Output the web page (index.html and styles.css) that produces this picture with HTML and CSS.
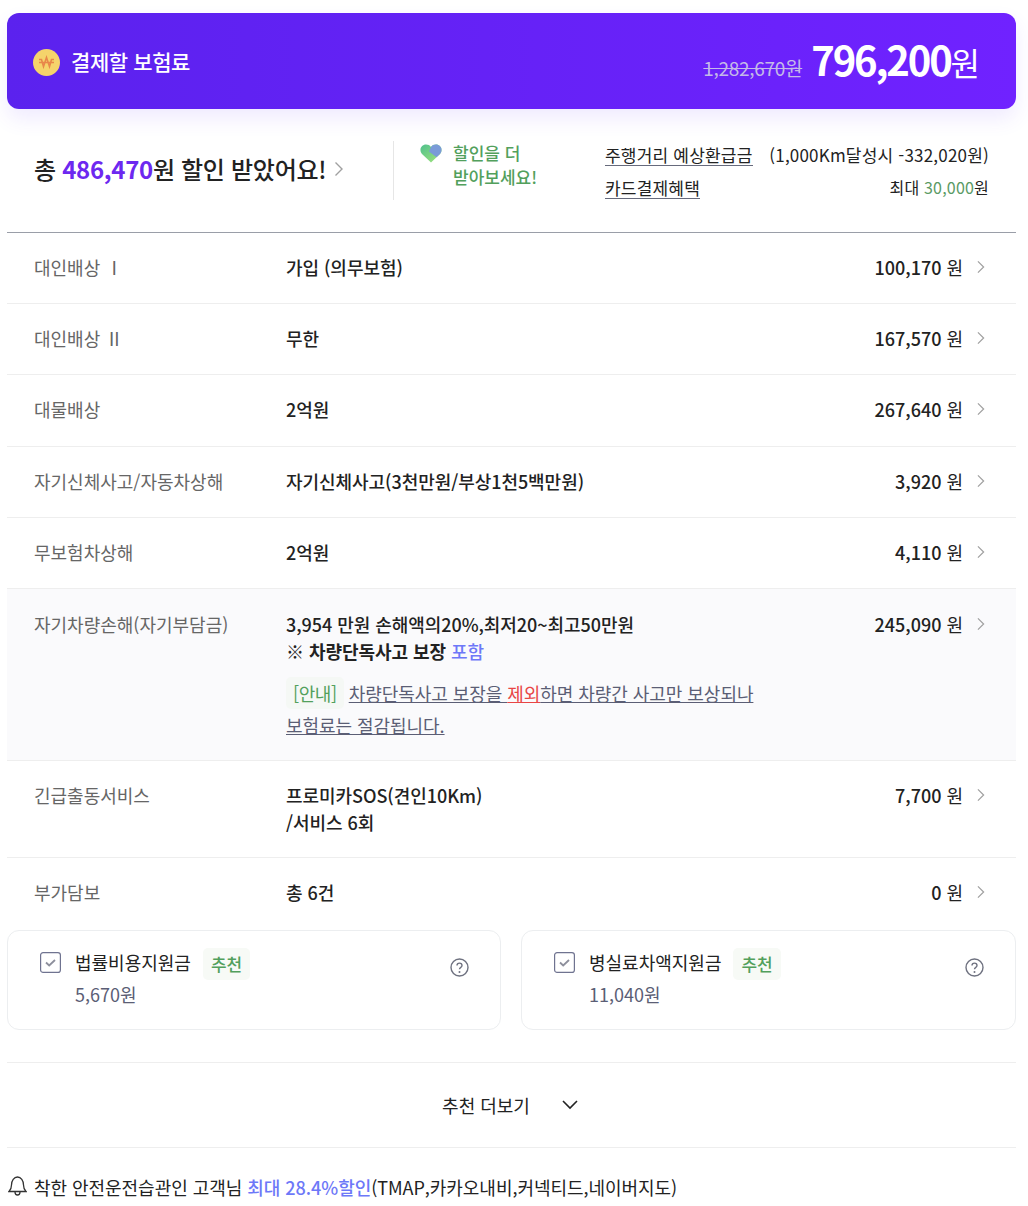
FILE: index.html
```html
<!DOCTYPE html>
<html lang="ko">
<head>
    <meta charset="UTF-8">
    <title>결제할 보험료</title>
    <link rel="stylesheet" href="styles.css">
</head>
<body>

<div class="page">
    <div class="pay-bar">
        <div class="pay-title">
            <svg class="coin" width="27" height="27" viewBox="0 0 27 27">
                <circle cx="13.5" cy="13.5" r="13.5" fill="#f5d36b"/>
                <path d="M6 10.500l2.500 0 2 7 3-9 3 9 2-7 2.500 0M6 13.500h15" fill="none" stroke="#e8874a" stroke-width="1.600"/>
            </svg>
            <span>결제할 보험료</span>
        </div>
        <div class="pay-price">
            <del>1,282,670원</del>
            <strong>796,200</strong><span class="won">원</span>
        </div>
    </div>

    <div class="discount">
        <div class="discount-total">
            <span>총 <b>486,470</b>원 할인 받았어요!</span>
            <svg class="arrow" width="10" height="16" viewBox="0 0 10 16"><path d="M1.500 1.500L8 8l-6.500 6.500"/></svg>
        </div>
        <div class="discount-more">
            <svg class="heart" width="22" height="19" viewBox="0 0 22 19">
                <defs>
                    <linearGradient id="hg" x1="0" y1="0" x2="1" y2="1">
                        <stop offset="0" stop-color="#4fc08d"/>
                        <stop offset="1" stop-color="#a5e67a"/>
                    </linearGradient>
                </defs>
                <path d="M11 18.500L2 10C-1.500 5.500 1.500 .5 6 .5c2.200 0 4 .8 5 2.500 1-1.700 2.800-2.500 5-2.500 4.500 0 7.500 5 4 9.500z" fill="url(#hg)"/>
                <path d="M11 3c1-1.700 2.800-2.500 5-2.500 4.500 0 7.500 5 4 9.500l-3.500 3.200L9 7.500z" fill="#7a9bd8"/>
            </svg>
            <p>할인을 더<br>받아보세요!</p>
        </div>
        <div class="discount-list">
            <div class="discount-line">
                <span class="link">주행거리 예상환급금</span>
                <span>(1,000Km달성시 -332,020원)</span>
            </div>
            <div class="discount-line">
                <span class="link">카드결제혜택</span>
                <span class="small">최대 <em>30,000</em>원</span>
            </div>
        </div>
    </div>

    <div class="table">
        <div class="row">
            <div class="name">대인배상 Ⅰ</div>
            <div class="value">가입 (의무보험)</div>
            <div class="amount">100,170<span>원</span></div>
            <svg class="arrow" width="10" height="14" viewBox="0 0 10 16"><path d="M1.500 1.500L8 8l-6.500 6.500"/></svg>
        </div>
        <div class="row">
            <div class="name">대인배상 Ⅱ</div>
            <div class="value">무한</div>
            <div class="amount">167,570<span>원</span></div>
            <svg class="arrow" width="10" height="14" viewBox="0 0 10 16"><path d="M1.500 1.500L8 8l-6.500 6.500"/></svg>
        </div>
        <div class="row">
            <div class="name">대물배상</div>
            <div class="value">2억원</div>
            <div class="amount">267,640<span>원</span></div>
            <svg class="arrow" width="10" height="14" viewBox="0 0 10 16"><path d="M1.500 1.500L8 8l-6.500 6.500"/></svg>
        </div>
        <div class="row">
            <div class="name">자기신체사고/자동차상해</div>
            <div class="value">자기신체사고(3천만원/부상1천5백만원)</div>
            <div class="amount">3,920<span>원</span></div>
            <svg class="arrow" width="10" height="14" viewBox="0 0 10 16"><path d="M1.500 1.500L8 8l-6.500 6.500"/></svg>
        </div>
        <div class="row">
            <div class="name">무보험차상해</div>
            <div class="value">2억원</div>
            <div class="amount">4,110<span>원</span></div>
            <svg class="arrow" width="10" height="14" viewBox="0 0 10 16"><path d="M1.500 1.500L8 8l-6.500 6.500"/></svg>
        </div>
        <div class="row row-tint">
            <div class="name">자기차량손해(자기부담금)</div>
            <div class="value">
                3,954 만원 손해액의20%,최저20~최고50만원<br>
                ※ <b>차량단독사고 보장</b> <i class="blue">포함</i>
                <p class="notice"><span class="tag">[안내]</span> <u>차량단독사고 보장을 </u><u class="red">제외</u><u>하면 차량간 사고만 보상되나</u><br><u>보험료는 절감됩니다.</u></p>
            </div>
            <div class="amount">245,090<span>원</span></div>
            <svg class="arrow" width="10" height="14" viewBox="0 0 10 16"><path d="M1.500 1.500L8 8l-6.500 6.500"/></svg>
        </div>
        <div class="row row-tall">
            <div class="name">긴급출동서비스</div>
            <div class="value">프로미카SOS(견인10Km)<br>/서비스 6회</div>
            <div class="amount">7,700<span>원</span></div>
            <svg class="arrow" width="10" height="14" viewBox="0 0 10 16"><path d="M1.500 1.500L8 8l-6.500 6.500"/></svg>
        </div>
        <div class="row row-last">
            <div class="name">부가담보</div>
            <div class="value">총 6건</div>
            <div class="amount">0<span>원</span></div>
            <svg class="arrow" width="10" height="14" viewBox="0 0 10 16"><path d="M1.500 1.500L8 8l-6.500 6.500"/></svg>
        </div>
    </div>

    <div class="cards">
        <div class="card">
            <svg class="check" width="21" height="21" viewBox="0 0 21 21">
                <rect x=".6" y=".6" width="19.800" height="19.800" rx="2.500" fill="#fff" stroke="#6f7390" stroke-width="1.200"/>
                <path d="M6 10.500l3.200 3 5.800-5.500" fill="none" stroke="#8d8f9c" stroke-width="1.800"/>
            </svg>
            <div class="card-text">
                <div class="card-name">법률비용지원금<span class="rec">추천</span></div>
                <div class="card-price">5,670원</div>
            </div>
            <svg class="help" width="19" height="19" viewBox="0 0 19 19">
                <circle cx="9.500" cy="9.500" r="8.500" fill="none" stroke="#6f7280" stroke-width="1.400"/>
                <path d="M7 7.500c0-3.200 5-3.200 5 0 0 2-2.500 1.800-2.500 3.800" fill="none" stroke="#6f7280" stroke-width="1.400"/>
                <circle cx="9.500" cy="14" r="1" fill="#6f7280"/>
            </svg>
        </div>
        <div class="card">
            <svg class="check" width="21" height="21" viewBox="0 0 21 21">
                <rect x=".6" y=".6" width="19.800" height="19.800" rx="2.500" fill="#fff" stroke="#6f7390" stroke-width="1.200"/>
                <path d="M6 10.500l3.200 3 5.800-5.500" fill="none" stroke="#8d8f9c" stroke-width="1.800"/>
            </svg>
            <div class="card-text">
                <div class="card-name">병실료차액지원금<span class="rec">추천</span></div>
                <div class="card-price">11,040원</div>
            </div>
            <svg class="help" width="19" height="19" viewBox="0 0 19 19">
                <circle cx="9.500" cy="9.500" r="8.500" fill="none" stroke="#6f7280" stroke-width="1.400"/>
                <path d="M7 7.500c0-3.200 5-3.200 5 0 0 2-2.500 1.800-2.500 3.800" fill="none" stroke="#6f7280" stroke-width="1.400"/>
                <circle cx="9.500" cy="14" r="1" fill="#6f7280"/>
            </svg>
        </div>
    </div>

    <div class="more">
        <span>추천 더보기</span>
        <svg width="16" height="10" viewBox="0 0 16 10"><path d="M1 1l7 7 7-7" fill="none" stroke="#222" stroke-width="1.600"/></svg>
    </div>

    <div class="bell-note">
        <svg width="19" height="21" viewBox="0 0 19 21">
            <path d="M1 15.500c1.500-1.500 2.500-3 2.500-6.500 0-4.500 2.500-8 6-8s6 3.500 6 8c0 3.500 1 5 2.500 6.500z" fill="none" stroke="#333" stroke-width="1.300"/>
            <path d="M7 16c0 4 5 4 5 0" fill="none" stroke="#333" stroke-width="1.300"/>
        </svg>
        <span>착한 안전운전습관인 고객님 <b>최대 28.4%할인</b>(TMAP,카카오내비,커넥티드,네이버지도)</span>
    </div>
</div>

</body>
</html>
```

FILE: styles.css
```css
* {
    box-sizing: border-box;
}
body {
    font-family: "Noto Sans CJK KR", "Noto Sans", sans-serif;
    margin: 0;
    padding: 0;
    background: #fff;
    color: #222;
    font-size: 18px;
}
.page {
    padding: 13px 12px 0 7px;
}
.pay-bar {
    height: 96px;
    border-radius: 12px;
    background: linear-gradient(to right, #5b22ee, #7022ff);
    box-shadow: 0 10px 20px rgba(112, 60, 255, 0.1);
    color: #fff;
    display: flex;
    justify-content: space-between;
    align-items: center;
    padding: 0 36px 4px 26px;
}
.pay-title {
    display: flex;
    align-items: center;
    gap: 11px;
    font-size: 21px;
    font-weight: 500;
    letter-spacing: -0.4px;
    margin-top: 4px;
}
.coin {
    margin-top: 2px;
}
.pay-price {
    line-height: 1;
}
.pay-price del {
    font-size: 19px;
    color: #c4b9e8;
    letter-spacing: -0.3px;
    margin-right: 4px;
}
.pay-price strong {
    font-size: 40px;
    font-weight: 700;
    letter-spacing: -2.2px;
}
.pay-price .won {
    font-size: 32px;
}
.discount {
    display: flex;
    align-items: center;
    height: 123px;
    padding: 0 27px;
}
.discount-total {
    width: 359px;
    font-size: 24px;
    font-weight: 500;
    letter-spacing: -0.3px;
    display: flex;
    align-items: center;
    gap: 8px;
    margin-top: -4px;
}
.discount-total b {
    color: #6d28f0;
    font-weight: 700;
}
.discount-more {
    width: 212px;
    height: 59px;
    border-left: 1px solid #e6e6e6;
    padding-left: 26px;
    display: flex;
    gap: 11px;
}
.discount-more p {
    margin: 0;
    color: #52a05c;
    font-size: 17px;
    font-weight: 500;
    line-height: 24px;
}
.heart {
    margin-top: 3px;
}
.discount-list {
    flex: 1;
    font-size: 17px;
    letter-spacing: 0.2px;
    margin-top: 2px;
}
.discount-line {
    display: flex;
    justify-content: space-between;
    height: 33px;
    line-height: 31px;
}
.link {
    border-bottom: 1px solid #666a7c;
    height: 27px;
}
.small {
    font-size: 16px;
}
.small em {
    font-style: normal;
    color: #5a9a64;
}
.table {
    border-top: 1px solid #9a9ea8;
}
.row {
    display: flex;
    align-items: flex-start;
    padding: 21px 30px 0 27px;
    min-height: 71.2px;
    border-bottom: 1px solid #eee;
    font-size: 18px;
    line-height: 27px;
}
.row-tint {
    background: #fafafc;
    padding-top: 22px;
    padding-bottom: 19px;
}
.row-tall {
    padding-bottom: 21px;
}
.row-last {
    border-bottom: 0;
    min-height: 72px;
}
.name {
    width: 252px;
    color: #666;
    flex-shrink: 0;
}
.value {
    flex: 1;
    font-weight: 500;
    letter-spacing: -0.05px;
}
.value b {
    font-weight: 700;
}
.blue {
    font-style: normal;
    color: #6d78f8;
}
.red {
    color: #e84545;
}
.notice {
    margin: 12px 0 0;
    width: 480px;
    color: #5b5e75;
    font-weight: 400;
    line-height: 32px;
}
.tag {
    background: #f5f8f5;
    color: #52a05c;
    padding: 3px 7px;
    border-radius: 5px;
    letter-spacing: -0.4px;
}
.amount {
    font-weight: 500;
    margin-right: 13px;
}
.amount span {
    font-weight: 400;
    margin-left: 5px;
}
.arrow {
    margin-top: 6px;
    flex-shrink: 0;
}
.arrow path {
    fill: none;
    stroke: #a0a0a0;
    stroke-width: 1.400;
}
.discount-total .arrow {
    margin-top: 0;
}
.cards {
    display: flex;
    gap: 20px;
}
.card {
    flex: 1;
    height: 100px;
    border: 1px solid #eceef0;
    border-radius: 12px;
    padding: 17px 31px 0 32px;
    display: flex;
    align-items: flex-start;
}
.card:first-child {
    flex: 0 0 494px;
}
.check {
    margin-top: 4px;
    flex-shrink: 0;
}
.card-text {
    flex: 1;
    margin-left: 14px;
}
.card-name {
    display: flex;
    align-items: flex-start;
    font-size: 18px;
    line-height: 28px;
}
.rec {
    background: #f7faf6;
    color: #52a05c;
    font-weight: 500;
    font-size: 17px;
    line-height: 32px;
    padding: 0 8px;
    border-radius: 5px;
    margin-left: 12px;
}
.card-price {
    color: #5b5e75;
    line-height: 27px;
    margin-top: 1px;
}
.help {
    margin-top: 10px;
}
.more {
    margin-top: 32px;
    height: 86px;
    border-top: 1px solid #eee;
    border-bottom: 1px solid #eee;
    display: flex;
    justify-content: center;
    align-items: center;
    gap: 32px;
}
.more svg {
    margin-right: 3px;
}
.bell-note {
    display: flex;
    align-items: center;
    gap: 7px;
    padding: 26px 0 0 1px;
    letter-spacing: -0.04px;
}
.bell-note b {
    font-weight: 500;
    color: #6d78f8;
}
```
